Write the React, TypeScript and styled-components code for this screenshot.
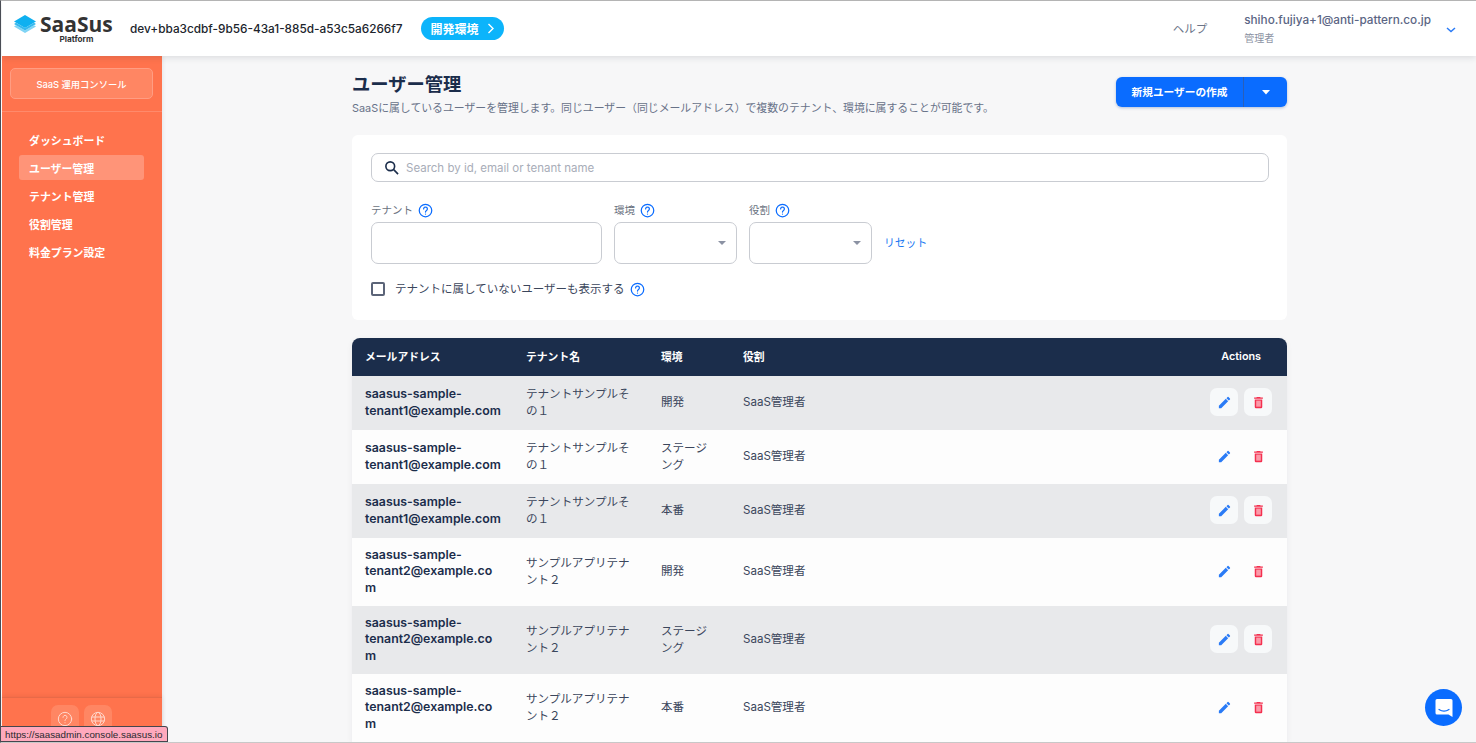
import React from 'react'
import styled, { createGlobalStyle } from 'styled-components'

const GlobalStyle = createGlobalStyle`
  html, body {
    margin: 0;
    padding: 0;
    height: 743px;
    overflow: hidden;
    background: #f7f7f8;
    font-family: Inter, "Noto Sans CJK JP", sans-serif;
    color: #1b2d4b;
  }
  * { box-sizing: border-box; }
`

interface UserRow {
  email: string[]
  tenant: string[]
  env: string[]
}

const t1 = ['saasus-sample-', 'tenant1@example.com']
const t2 = ['saasus-sample-', 'tenant2@example.co', 'm']
const n1 = ['テナントサンプルそ', 'の１']
const n2 = ['サンプルアプリテナ', 'ント２']

const rows: UserRow[] = [
  { email: t1, tenant: n1, env: ['開発'] },
  { email: t1, tenant: n1, env: ['ステージ', 'ング'] },
  { email: t1, tenant: n1, env: ['本番'] },
  { email: t2, tenant: n2, env: ['開発'] },
  { email: t2, tenant: n2, env: ['ステージ', 'ング'] },
  { email: t2, tenant: n2, env: ['本番'] },
]

const navItems = ['ダッシュボード', 'ユーザー管理', 'テナント管理', '役割管理', '料金プラン設定']

function HelpIcon({ size = 15 }: { size?: number }) {
  return (
    <svg width={size} height={size} viewBox="0 0 24 24" fill="none" stroke="#0a6cff" strokeWidth="2" strokeLinecap="round">
      <circle cx="12" cy="12" r="10" />
      <path d="M9 9.500a3 3 0 1 1 4.600 2.500c-1 .7-1.600 1.200-1.600 2.500" />
      <path d="M12 17.600v.1" />
    </svg>
  )
}

function LogoMark() {
  return (
    <svg width="24" height="19" viewBox="0 0 24 19">
      <path d="M1 11.500 12 18l11-6.500-2-1.200L12 15.500 3 10.300z" fill="#7fd4f5" />
      <path d="M1 9 12 15.500 23 9l-2-1.200L12 13 3 7.800z" fill="#35b8ee" />
      <path d="M1 6.500 12 0l11 6.500L12 13z" fill="#0fb0f0" />
    </svg>
  )
}

function PencilIcon() {
  return (
    <svg width="15" height="15" viewBox="0 0 24 24" fill="#2a7bf6">
      <path d="M3 17.250V21h3.750L17.810 9.940l-3.750-3.750zM20.710 7.040a1 1 0 0 0 0-1.410l-2.340-2.340a1 1 0 0 0-1.410 0l-1.830 1.830 3.750 3.750z" />
    </svg>
  )
}

function TrashIcon() {
  return (
    <svg width="15" height="15" viewBox="0 0 24 24">
      <path d="M6 19a2 2 0 0 0 2 2h8a2 2 0 0 0 2-2V7H6z" fill="#f4304f" />
      <path d="M8.300 9h7.400v9.700H8.300z" fill="#fb9aa9" />
      <path d="M15.500 4l-1-1h-5l-1 1H5v2h14V4z" fill="#f4304f" />
    </svg>
  )
}

export default function App() {
  return (
    <>
      <GlobalStyle />
      <Page>
        <Header>
          <Brand>
            <LogoMark />
            <BrandText>
              <BrandName>SaaSus</BrandName>
              <BrandSub>Platform</BrandSub>
            </BrandText>
          </Brand>
          <EnvId>dev+bba3cdbf-9b56-43a1-885d-a53c5a6266f7</EnvId>
          <EnvBadge>
            開発環境
            <svg width="8" height="11" viewBox="0 0 8 11" fill="none" stroke="#fff" strokeWidth="1.400">
              <path d="M1.500 1 6 5.500 1.500 10" />
            </svg>
          </EnvBadge>
          <HeaderSpacer />
          <HelpLink>ヘルプ</HelpLink>
          <Account>
            <AccountMail>shiho.fujiya+1@anti-pattern.co.jp</AccountMail>
            <AccountRole>管理者</AccountRole>
          </Account>
          <AccountChevron width="10" height="6" viewBox="0 0 10 6" fill="none" stroke="#2a7bf6" strokeWidth="1.500">
            <path d="M1 1l4 3.500L9 1" />
          </AccountChevron>
        </Header>
        <Body>
          <Sidebar>
            <ConsoleWrap>
              <ConsoleButton>SaaS 運用コンソール</ConsoleButton>
            </ConsoleWrap>
            <Nav>
              {navItems.map((item) => (
                <NavItem key={item} $active={item === 'ユーザー管理'}>
                  {item}
                </NavItem>
              ))}
            </Nav>
            <SideFooter>
              <SideIcon>
                <svg width="16" height="16" viewBox="0 0 24 24" fill="none" stroke="#ffd9cd" strokeWidth="1.500" strokeLinecap="round">
                  <circle cx="12" cy="12" r="10" />
                  <path d="M9 9.500a3 3 0 1 1 4.600 2.500c-1 .7-1.600 1.200-1.600 2.500M12 17.600v.1" />
                </svg>
              </SideIcon>
              <SideIcon>
                <svg width="16" height="16" viewBox="0 0 24 24" fill="none" stroke="#ffd9cd" strokeWidth="1.500">
                  <circle cx="12" cy="12" r="10" />
                  <ellipse cx="12" cy="12" rx="4.500" ry="10" />
                  <path d="M2.500 9h19M2.500 15h19" />
                </svg>
              </SideIcon>
            </SideFooter>
          </Sidebar>
          <Main>
            <TitleRow>
              <div>
                <Title>ユーザー管理</Title>
                <Subtitle>SaaSに属しているユーザーを管理します。同じユーザー（同じメールアドレス）で複数のテナント、環境に属することが可能です。</Subtitle>
              </div>
              <SplitButton>
                <SplitLabel>新規ユーザーの作成</SplitLabel>
                <SplitCaret>
                  <svg width="8" height="5" viewBox="0 0 8 5" fill="#fff">
                    <path d="M0 0h8L4 4.500z" />
                  </svg>
                </SplitCaret>
              </SplitButton>
            </TitleRow>

            <FilterCard>
              <SearchBox>
                <svg width="15" height="15" viewBox="0 0 24 24" fill="none" stroke="#1b2d4b" strokeWidth="2.600">
                  <circle cx="10" cy="10" r="7" />
                  <path d="m15.500 15.500 7 7" />
                </svg>
                <SearchHint>Search by id, email or tenant name</SearchHint>
              </SearchBox>
              <FilterRow>
                <Field $width={231}>
                  <FieldLabel>
                    テナント <HelpIcon />
                  </FieldLabel>
                  <InputBox />
                </Field>
                <Field $width={123}>
                  <FieldLabel>
                    環境 <HelpIcon />
                  </FieldLabel>
                  <InputBox>
                    <SelectCaret />
                  </InputBox>
                </Field>
                <Field $width={123}>
                  <FieldLabel>
                    役割 <HelpIcon />
                  </FieldLabel>
                  <InputBox>
                    <SelectCaret />
                  </InputBox>
                </Field>
                <ResetLink>リセット</ResetLink>
              </FilterRow>
              <CheckRow>
                <CheckBox />
                <CheckLabel>テナントに属していないユーザーも表示する</CheckLabel>
                <HelpIcon />
              </CheckRow>
            </FilterCard>

            <Table>
              <colgroup>
                <col style={{ width: 161 }} />
                <col style={{ width: 135 }} />
                <col style={{ width: 82 }} />
                <col />
                <col style={{ width: 120 }} />
              </colgroup>
              <thead>
                <tr>
                  <Th>メールアドレス</Th>
                  <Th>テナント名</Th>
                  <Th>環境</Th>
                  <Th>役割</Th>
                  <ActionsTh>Actions</ActionsTh>
                </tr>
              </thead>
              <tbody>
                {rows.map((row, i) => (
                  <Row key={i} $striped={i % 2 === 0} $tall={row.email.length > 2}>
                    <EmailCell>
                      {row.email.map((line) => (
                        <div key={line}>{line}</div>
                      ))}
                    </EmailCell>
                    <TextCell>
                      {row.tenant.map((line) => (
                        <div key={line}>{line}</div>
                      ))}
                    </TextCell>
                    <TextCell>
                      {row.env.map((line) => (
                        <div key={line}>{line}</div>
                      ))}
                    </TextCell>
                    <TextCell>SaaS管理者</TextCell>
                    <TextCell>
                      <Actions>
                        <ActionButton $striped={i % 2 === 0}>
                          <PencilIcon />
                        </ActionButton>
                        <ActionButton $striped={i % 2 === 0}>
                          <TrashIcon />
                        </ActionButton>
                      </Actions>
                    </TextCell>
                  </Row>
                ))}
              </tbody>
            </Table>
          </Main>
        </Body>
        <StatusTip>https://saasadmin.console.saasus.io</StatusTip>
        <ChatBubble>
          <svg width="18" height="20" viewBox="0 0 18 20">
            <path d="M2 1h14a1.500 1.500 0 0 1 1.500 1.500V19l-4-2.500H2A1.500 1.500 0 0 1 .5 15V2.500A1.500 1.500 0 0 1 2 1z" fill="#fff" />
            <path d="M4 11.500c3 2 7 2 10 0" fill="none" stroke="#0a6cff" strokeWidth="1.200" strokeLinecap="round" />
          </svg>
        </ChatBubble>
      </Page>
    </>
  )
}

const Page = styled.div`
  position: relative;
  width: 1476px;
  height: 743px;
  overflow: hidden;
  display: flex;
  flex-direction: column;
  padding-left: 1px;
  background: #fff;
  border-top: 1px solid #b4b4b4;
  border-left: 1px solid #4a4d55;
  border-bottom: 1px solid #c8c8c8;
`

const Header = styled.header`
  position: relative;
  z-index: 2;
  flex: none;
  height: 55px;
  display: flex;
  align-items: center;
  padding: 0 20px 0 11px;
  background: #fff;
  box-shadow: 0 2px 6px rgba(30, 40, 60, 0.12);
`

const Brand = styled.div`
  display: flex;
  align-items: flex-start;
  gap: 3px;
  width: 117px;
  padding-top: 1px;
`

const BrandText = styled.div`
  display: flex;
  flex-direction: column;
  align-items: center;
  gap: 1px;
`

const BrandName = styled.div`
  font-size: 21px;
  line-height: 19px;
  font-weight: 700;
  color: #333;
  font-family: "Open Sans", sans-serif;
`

const BrandSub = styled.div`
  font-size: 8.200px;
  line-height: 9px;
  font-weight: 700;
  color: #333;
`

const EnvId = styled.div`
  font-size: 11.800px;
  font-weight: 500;
  color: #20242c;
  white-space: nowrap;
`

const EnvBadge = styled.div`
  margin-left: 19px;
  width: 83px;
  height: 23px;
  border-radius: 12px;
  background: #0cb4fb;
  color: #fff;
  font-size: 12px;
  font-weight: 700;
  display: flex;
  align-items: center;
  justify-content: center;
  gap: 9px;
`

const HeaderSpacer = styled.div`
  flex: 1;
`

const HelpLink = styled.div`
  padding-bottom: 2px;
  font-size: 11.500px;
  color: #6b7488;
  margin-right: 37px;
`

const Account = styled.div`
  display: flex;
  flex-direction: column;
  gap: 3px;
`

const AccountMail = styled.div`
  font-size: 11.750px;
  line-height: 15px;
  font-weight: 500;
  color: #5b6584;
`

const AccountRole = styled.div`
  font-size: 10px;
  line-height: 14px;
  color: #8b92a3;
`

const AccountChevron = styled.svg`
  margin-left: 15px;
  margin-top: 3px;
`

const Body = styled.div`
  flex: 1;
  min-height: 0;
  display: flex;
  background: #f7f7f8;
`

const Sidebar = styled.aside`
  flex: none;
  width: 160px;
  display: flex;
  flex-direction: column;
  background: #ff734d;
  box-shadow: 1px 0 4px rgba(30, 40, 60, 0.08);
`

const ConsoleWrap = styled.div`
  padding: 12px 9px 12px 8px;
  border-bottom: 1px solid #ff8a6b;
`

const ConsoleButton = styled.div`
  height: 31px;
  border: 1px solid #ff9d83;
  border-radius: 5px;
  background: #ff8663;
  color: #fff;
  font-size: 9.300px;
  font-weight: 500;
  display: flex;
  align-items: center;
  justify-content: center;
`

const Nav = styled.nav`
  flex: 1;
  display: flex;
  flex-direction: column;
  gap: 3px;
  padding: 15px 18px 0 17px;
`

const NavItem = styled.div<{ $active?: boolean }>`
  height: 25px;
  padding-left: 10px;
  border-radius: 3px;
  display: flex;
  align-items: center;
  color: #fff;
  font-size: 10.900px;
  font-weight: 700;
  background: ${({ $active }) => ($active ? '#ff9478' : 'transparent')};
`

const SideFooter = styled.div`
  flex: none;
  height: 45px;
  display: flex;
  justify-content: center;
  gap: 5px;
  padding: 7px 2px 0 0;
  border-top: 1px solid #e86a48;
  box-shadow: 0 -1px 4px rgba(120, 50, 30, 0.12);
`

const SideIcon = styled.div`
  width: 28px;
  height: 28px;
  border-radius: 7px;
  background: #ff8663;
  display: flex;
  align-items: center;
  justify-content: center;
`

const Main = styled.main`
  flex: 1;
  min-width: 0;
  padding: 0 189px 0 190px;
`

const TitleRow = styled.div`
  display: flex;
  justify-content: space-between;
  align-items: flex-start;
  padding-top: 16px;
  height: 79px;
`

const Title = styled.h1`
  margin: 0;
  font-size: 18.300px;
  line-height: 24px;
  font-weight: 700;
  color: #1b2d4b;
`

const Subtitle = styled.p`
  margin: 5px 0 0;
  font-size: 10.870px;
  line-height: 14px;
  color: #687288;
  white-space: nowrap;
`

const SplitButton = styled.div`
  margin-top: 5px;
  width: 171px;
  height: 30px;
  display: flex;
  border-radius: 6px;
  background: #0a6cff;
  box-shadow: 0 1px 3px rgba(10, 60, 150, 0.3);
`

const SplitLabel = styled.div`
  width: 128px;
  padding-bottom: 1px;
  display: flex;
  align-items: center;
  justify-content: center;
  color: #fff;
  font-size: 10.700px;
  font-weight: 700;
  border-right: 1px solid #2a5fb8;
`

const SplitCaret = styled.div`
  flex: 1;
  display: flex;
  align-items: center;
  justify-content: center;
`

const FilterCard = styled.section`
  height: 185px;
  padding: 18px 18px 0 19px;
  background: #fff;
  border-radius: 6px;
`

const SearchBox = styled.div`
  height: 29px;
  display: flex;
  align-items: center;
  gap: 7px;
  padding-left: 12px;
  border: 1px solid #c9ccd2;
  border-radius: 7px;
`

const SearchHint = styled.span`
  font-size: 11.500px;
  color: #a8adb8;
`

const FilterRow = styled.div`
  display: flex;
  align-items: flex-end;
  gap: 12px;
  margin-top: 21px;
`

const Field = styled.div<{ $width: number }>`
  width: ${({ $width }) => $width}px;
  flex: none;
`

const FieldLabel = styled.div`
  height: 18px;
  display: flex;
  align-items: flex-start;
  gap: 5px;
  font-size: 10.500px;
  line-height: 15px;
  color: #6b7280;
`

const InputBox = styled.div`
  position: relative;
  height: 42px;
  margin-top: 1px;
  background: #fff;
  border: 1px solid #c9ccd2;
  border-radius: 7px;
`

const SelectCaret = styled.span`
  position: absolute;
  top: 18px;
  right: 10px;
  border-top: 4px solid #8b92a3;
  border-left: 4px solid transparent;
  border-right: 4px solid transparent;
`

const ResetLink = styled.a`
  align-self: flex-end;
  margin-bottom: 13px;
  font-size: 10.800px;
  line-height: 14px;
  color: #1a78f2;
`

const CheckRow = styled.label`
  display: flex;
  align-items: center;
  margin-top: 17px;
`

const CheckBox = styled.span`
  width: 14px;
  height: 14px;
  margin-right: 10px;
  border: 2px solid #5b6478;
  border-radius: 2px;
`

const CheckLabel = styled.span`
  font-size: 11.500px;
  line-height: 16px;
  color: #3b465c;
  margin-right: 6px;
`

const Table = styled.table`
  width: 100%;
  margin-top: 18px;
  border-collapse: separate;
  border-spacing: 0;
  table-layout: fixed;
  box-shadow: 0 2px 6px rgba(30, 40, 60, 0.06);
  border-radius: 8px 8px 0 0;
`

const Th = styled.th`
  height: 38px;
  padding: 0 0 2px 13px;
  background: #1b2d4b;
  color: #fff;
  text-align: left;
  font-size: 10.800px;
  font-weight: 600;

  &:first-child {
    border-top-left-radius: 8px;
  }
`

const ActionsTh = styled(Th)`
  padding: 0 26px 2px 0;
  text-align: right;
  border-top-right-radius: 8px;
`

const Row = styled.tr<{ $striped: boolean; $tall: boolean }>`
  height: ${({ $tall }) => ($tall ? 68 : 54)}px;
  background: ${({ $striped }) => ($striped ? '#e8e9eb' : '#fdfdfd')};
`

const TextCell = styled.td`
  padding: 0 0 1px 13px;
  font-size: 11.550px;
  line-height: 16.500px;
  color: #3b465c;
  vertical-align: middle;
`

const EmailCell = styled(TextCell)`
  font-size: 12.350px;
  font-weight: 600;
  color: #1b2d4b;
`

const Actions = styled.div`
  display: flex;
  justify-content: flex-end;
  gap: 6px;
  padding-right: 15px;
  margin-bottom: 1px;
`

const ActionButton = styled.div<{ $striped: boolean }>`
  width: 28px;
  height: 28px;
  border-radius: 7px;
  background: ${({ $striped }) => ($striped ? '#f7f9fa' : '#fdfdfd')};
  display: flex;
  align-items: center;
  justify-content: center;
`

const StatusTip = styled.div`
  position: absolute;
  z-index: 3;
  left: -1px;
  bottom: 0;
  width: 168px;
  height: 16px;
  padding-left: 5px;
  display: flex;
  align-items: center;
  background: #ffa9bd;
  border: 1px solid #44464d;
  border-left: 0;
  border-radius: 0 3px 0 0;
  font-family: "Liberation Sans", sans-serif;
  font-size: 9.800px;
  color: #2a2a2e;
  white-space: nowrap;
`

const ChatBubble = styled.div`
  position: absolute;
  z-index: 3;
  right: 14px;
  bottom: 16px;
  width: 37px;
  height: 37px;
  border-radius: 50%;
  background: #0a6cff;
  display: flex;
  align-items: center;
  justify-content: center;
`
